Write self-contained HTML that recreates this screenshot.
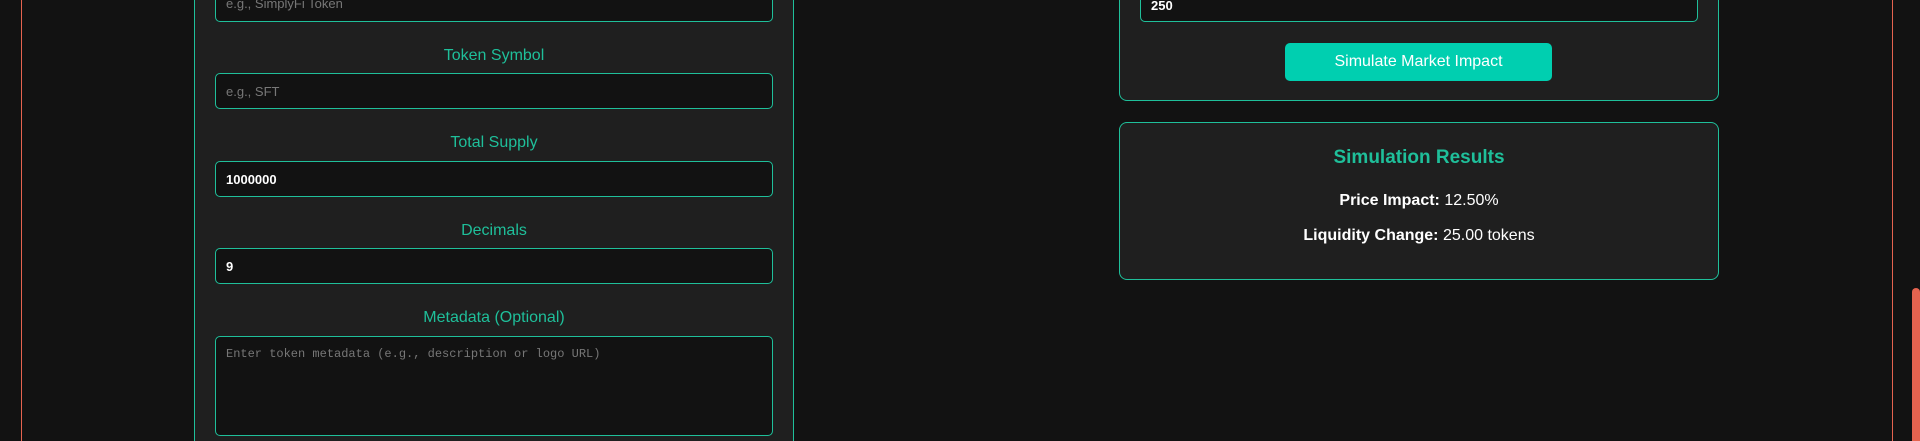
<!DOCTYPE html>
<html style="overflow:hidden;height:441px"><head><style>
*{box-sizing:border-box;margin:0;padding:0}
body{width:1920px;height:441px;background:#121212;overflow:hidden;position:relative;font-family:"Liberation Sans",Arial,sans-serif}
.vl{position:absolute;top:0;height:441px;width:1px;background:#e5634f}
.panel{position:absolute;background:#1f1f1f;border:1px solid #1fbf9a;border-radius:8px}
.inp{position:absolute;background:#121212;border:1.5px solid #1fbf9a;border-radius:5px;color:#fff;font-size:13px;padding-left:10px;display:flex;align-items:center}
.ph{color:#777}
.lbl{position:absolute;left:195px;width:598px;text-align:center;color:#1fbf9a;font-size:16px}
</style></head><body>
<div class="vl" style="left:21px"></div>
<div class="vl" style="left:1892px"></div>
<div style="position:absolute;left:1912px;top:288px;width:8px;height:153px;background:#e5634f;border-radius:4px 4px 0 0"></div>

<div class="panel" style="left:194px;top:-20px;width:600px;height:461px;border-radius:0;border-bottom:none"></div>
<div class="inp" style="left:215px;top:-14px;width:558px;height:36px;align-items:flex-end;padding-bottom:10px"><span class="ph">e.g., SimplyFi Token</span></div>
<div class="lbl" style="top:47px">Token Symbol</div>
<div class="inp" style="left:215px;top:73px;width:558px;height:36px"><span class="ph">e.g., SFT</span></div>
<div class="lbl" style="top:134px">Total Supply</div>
<div class="inp" style="left:215px;top:161px;width:558px;height:36px;font-weight:bold">1000000</div>
<div class="lbl" style="top:222px">Decimals</div>
<div class="inp" style="left:215px;top:248px;width:558px;height:36px;font-weight:bold">9</div>
<div class="lbl" style="top:309px">Metadata (Optional)</div>
<div class="inp" style="left:215px;top:336px;width:558px;height:100px;align-items:flex-start;padding-top:10px;font-family:'Liberation Mono',monospace;font-size:12px"><span class="ph">Enter token metadata (e.g., description or logo URL)</span></div>

<div class="panel" style="left:1119px;top:-20px;width:600px;height:121px"></div>
<div class="inp" style="left:1140px;top:-14px;width:558px;height:36px;align-items:flex-end;padding-bottom:8px;font-weight:bold">250</div>
<div style="position:absolute;left:1285px;top:43px;width:267px;height:38px;background:#00cfb0;border-radius:5px;color:#fff;font-size:16px;display:flex;align-items:center;justify-content:center">Simulate Market Impact</div>

<div class="panel" style="left:1119px;top:122px;width:600px;height:158px"></div>
<div style="position:absolute;left:1119px;width:600px;top:147px;text-align:center;color:#1fbf9a;font-size:19px;font-weight:bold">Simulation Results</div>
<div style="position:absolute;left:1119px;width:600px;top:192px;text-align:center;color:#fff;font-size:16px"><b>Price Impact:</b> 12.50%</div>
<div style="position:absolute;left:1119px;width:600px;top:227px;text-align:center;color:#fff;font-size:16px"><b>Liquidity Change:</b> 25.00 tokens</div>
</body></html>
